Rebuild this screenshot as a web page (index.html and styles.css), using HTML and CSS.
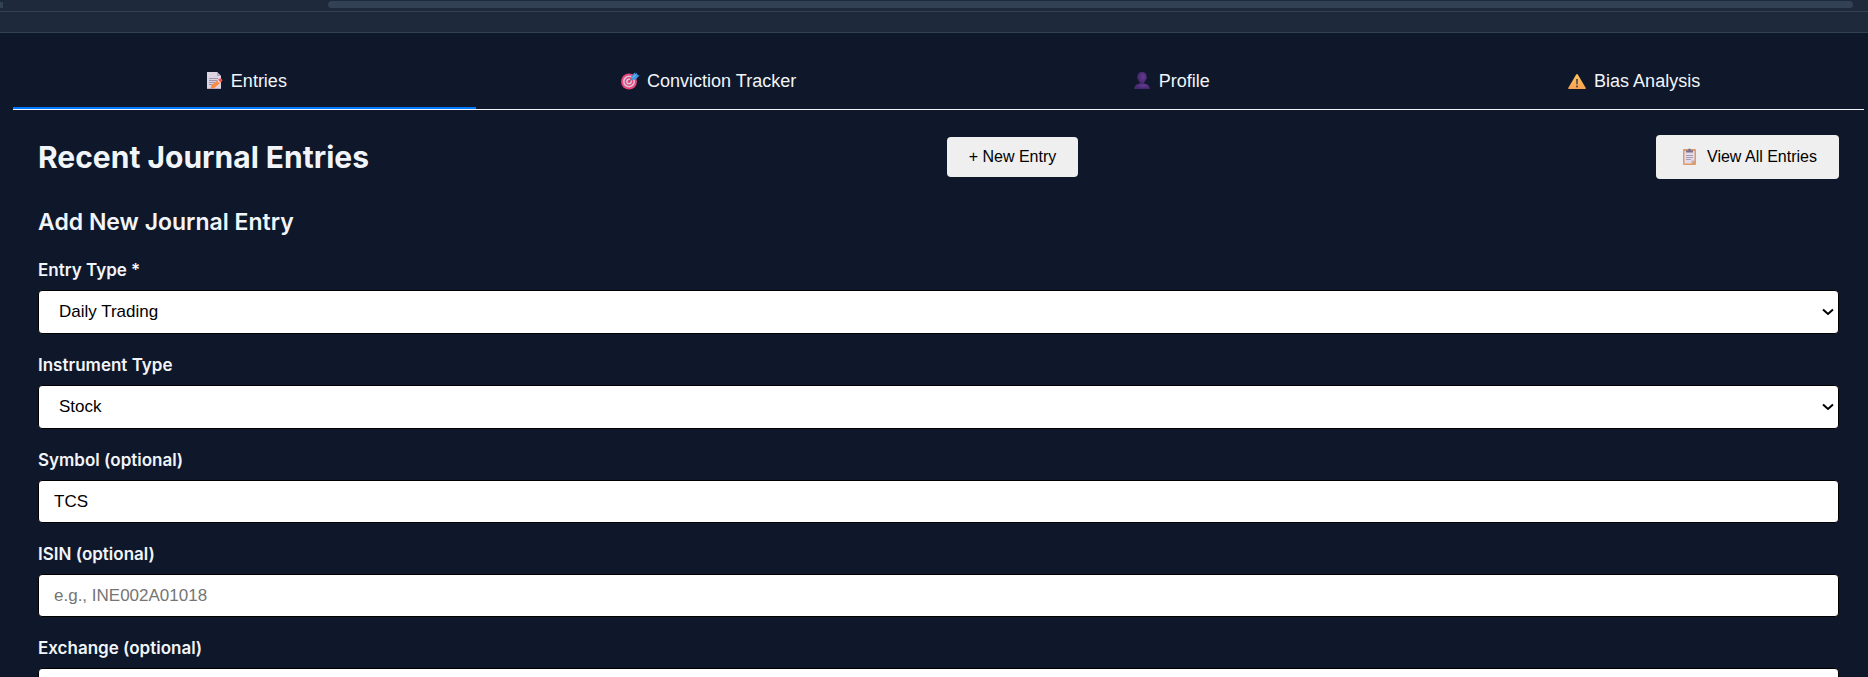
FILE: index.html
```html
<!DOCTYPE html>
<html lang="en">
<head>
    <meta charset="UTF-8">
    <meta name="viewport" content="width=device-width, initial-scale=1.0">
    <title>Trading Journal</title>
    <link rel="stylesheet" href="styles.css">
</head>
<body>
    <div class="scroll-strip">
        <div class="scroll-end"></div>
        <div class="scroll-thumb"></div>
    </div>
    <div class="sub-bar"></div>

    <main class="journal">
        <nav class="tabs">
            <button type="button" class="tab active">
                <svg class="icon" viewBox="0 0 24 20" aria-hidden="true">
                    <path d="M5 1h10l4 4v13H5z" fill="#dcd3e3"/>
                    <path d="M15 1l4 4h-4z" fill="#b3a9bd"/>
                    <path d="M5 17h14v1H5z" fill="#b9adc6"/>
                    <path d="M7 7.5h9M7 9.5h9M7 11.500h6M7 13.500h4" stroke="#9e94ab" stroke-width="1"/>
                    <path d="M8.500 17.500l1-3 6.500-5.500 2.500 2.700-6.500 5.500z" fill="#ff8a3c"/>
                    <path d="M15.200 9.700l1-.9 2.500 2.600-1 .9z" fill="#e8dfec"/>
                    <path d="M16.200 8.800l1.300-1.100q2-.5 2.800 1v1.200L18.700 11.400z" fill="#f8503f"/>
                </svg>
                Entries
            </button>
            <button type="button" class="tab">
                <svg class="icon" viewBox="0 0 24 20" aria-hidden="true">
                    <circle cx="11" cy="10.500" r="8" fill="#e8457a"/>
                    <circle cx="11" cy="10.500" r="5.200" fill="none" stroke="#d6c3dc" stroke-width="1.600"/>
                    <circle cx="11" cy="10.500" r="2.200" fill="none" stroke="#e3c5d6" stroke-width="1.400"/>
                    <path d="M11 10.500L16 5.500" stroke="#6b6178" stroke-width="1.200"/>
                    <path d="M13 6l3.500-4.500 1.500 1.500.5-1.500 1 2.500 2 .5-4 4-4 .5z" fill="#3f97e0"/>
                    <path d="M14.500 7l3.500-3.500" stroke="#79c0f2" stroke-width="1"/>
                </svg>
                Conviction Tracker
            </button>
            <button type="button" class="tab">
                <svg class="icon" viewBox="0 0 24 20" aria-hidden="true">
                    <defs>
                        <radialGradient id="bust" cx="60%" cy="40%" r="60%">
                            <stop offset="0" stop-color="#633b91"/>
                            <stop offset="1" stop-color="#43266a"/>
                        </radialGradient>
                    </defs>
                    <path d="M7.500 5.500Q7.500 1 12 1t4.500 4.500q.6.300.4 1.600t-1 1.400q-.6 2-1.900 2.900v1.500h-4v-1.500q-1.300-.9-1.900-2.900-.8-.1-1-1.400t.4-1.600z" fill="url(#bust)"/>
                    <path d="M4 18q.3-4 4-5l2-.7q2 1.200 4 0l2 .7q3.700 1 4 5z" fill="url(#bust)"/>
                </svg>
                Profile
            </button>
            <button type="button" class="tab">
                <svg class="icon" viewBox="0 0 24 20" aria-hidden="true">
                    <defs>
                        <linearGradient id="warn" x1="0" y1="0" x2="0" y2="1">
                            <stop offset="0" stop-color="#ffc65c"/>
                            <stop offset="1" stop-color="#f9a150"/>
                        </linearGradient>
                    </defs>
                    <path d="M11.200 3.600q.8-1 1.600 0L20.800 17q.3 1-.8 1H4q-1.100 0-.8-1z" fill="url(#warn)"/>
                    <path d="M11 8h2l-.3 5.500h-1.400z" fill="#574a50"/>
                    <circle cx="12" cy="15.500" r="1.100" fill="#574a50"/>
                </svg>
                Bias Analysis
            </button>
        </nav>

        <section class="panel">
            <div class="panel-header">
                <h2>Recent Journal Entries</h2>
                <button type="button" class="btn">+ New Entry</button>
                <button type="button" class="btn btn-tall">
                    <svg class="icon" viewBox="0 0 24 20" aria-hidden="true">
                        <rect x="5" y="2" width="13" height="16" rx="1" fill="#e09a68"/>
                        <path d="M6.500 4h10v9.500L13.500 16.500h-7z" fill="#e3daea"/>
                        <path d="M13.500 16.500v-3h3z" fill="#b8a9c4"/>
                        <path d="M8 5.500V3.500h1.800q.2-1.900 1.700-1.900t1.700 1.900H15v2z" fill="#7d7391"/>
                        <path d="M8 8.500h7M8 10.500h7M8 12.500h5" stroke="#a99db5" stroke-width="1"/>
                    </svg>
                    View All Entries
                </button>
            </div>

            <form class="entry-form">
                <h3>Add New Journal Entry</h3>
                <div class="field">
                    <label for="entryType">Entry Type *</label>
                    <select id="entryType">
                        <option>Daily Trading</option>
                    </select>
                </div>
                <div class="field">
                    <label for="instrumentType">Instrument Type</label>
                    <select id="instrumentType">
                        <option>Stock</option>
                    </select>
                </div>
                <div class="field">
                    <label for="symbol">Symbol (optional)</label>
                    <input type="text" id="symbol" value="TCS">
                </div>
                <div class="field">
                    <label for="isin">ISIN (optional)</label>
                    <input type="text" id="isin" placeholder="e.g., INE002A01018">
                </div>
                <div class="field">
                    <label for="exchange">Exchange (optional)</label>
                    <select id="exchange">
                        <option>NSE</option>
                    </select>
                </div>
            </form>
        </section>
    </main>
</body>
</html>
```
FILE: styles.css
```css
* { box-sizing: border-box; }
html { background: #0f172a; }
body {
    margin: 0;
    height: 100vh;
    overflow: hidden;
    background: #0f172a;
    color: #f1f5f9;
    font-family: Inter, sans-serif;
    font-size: 17px;
}

/* top bars */
.scroll-strip {
    display: flex;
    gap: 325px;
    height: 12px;
    padding: 1px 15px 3px 0;
    background: #1e293b;
    border-bottom: 1px solid #334155;
}
.scroll-end { width: 3px; height: 6px; margin-top: 1px; background: #334155; }
.scroll-thumb { flex: 1; height: 7px; border-radius: 4px; background: #334155; }
.sub-bar { height: 21px; background: #1e293b; border-bottom: 1px solid #334155; }

.journal { padding: 21px 4px 0 13px; }

/* tabs */
.tabs { display: flex; border-bottom: 1px solid #f1f5f9; }
.tab {
    flex: 1;
    display: flex;
    align-items: center;
    justify-content: center;
    gap: 5px;
    padding: 17px 16px 16px;
    border: 0;
    border-bottom: 2px solid transparent;
    background: none;
    color: #f1f5f9;
    font: 18px/20px "Liberation Sans", Arial, sans-serif;
    cursor: pointer;
}
.tab.active { border-bottom-color: #007bff; }
.icon { width: 24px; height: 20px; flex: none; }

/* panel */
.panel { padding: 25px 25px 0; }
.panel-header { display: flex; align-items: center; justify-content: space-between; }
h2 { margin: 0; font-size: 30px; line-height: 44px; font-weight: 700; }
h3 { margin: 28px 0 20px; font-size: 23px; line-height: 30px; font-weight: 600; }
.btn {
    display: flex;
    align-items: center;
    gap: 5px;
    padding: 10px 22px;
    border: 0;
    border-radius: 4px;
    background: #efefef;
    color: #000;
    font: 16px/20px "Liberation Sans", Arial, sans-serif;
    cursor: pointer;
}
.btn-tall { padding-top: 12px; padding-bottom: 12px; }

/* form */
.field { margin-bottom: 18px; }
label { display: block; margin-bottom: 7px; line-height: 26px; font-weight: 600; }
select, input {
    display: block;
    width: 100%;
    border: 1px solid #000;
    border-radius: 4px;
    background: #fff;
    color: #000;
    font: 17px/20px "Liberation Sans", Arial, sans-serif;
}
select {
    appearance: none;
    height: 44px;
    padding: 0 20px;
    background: #fff url("data:image/svg+xml,%3Csvg xmlns='http://www.w3.org/2000/svg' width='12' height='8'%3E%3Cpath d='M1 1.500l5 4.500 5-4.500' fill='none' stroke='%23000' stroke-width='2'/%3E%3C/svg%3E") no-repeat right 4px center;
}
input { height: 43px; padding: 0 15px; }
input::placeholder { color: #757575; }
```
